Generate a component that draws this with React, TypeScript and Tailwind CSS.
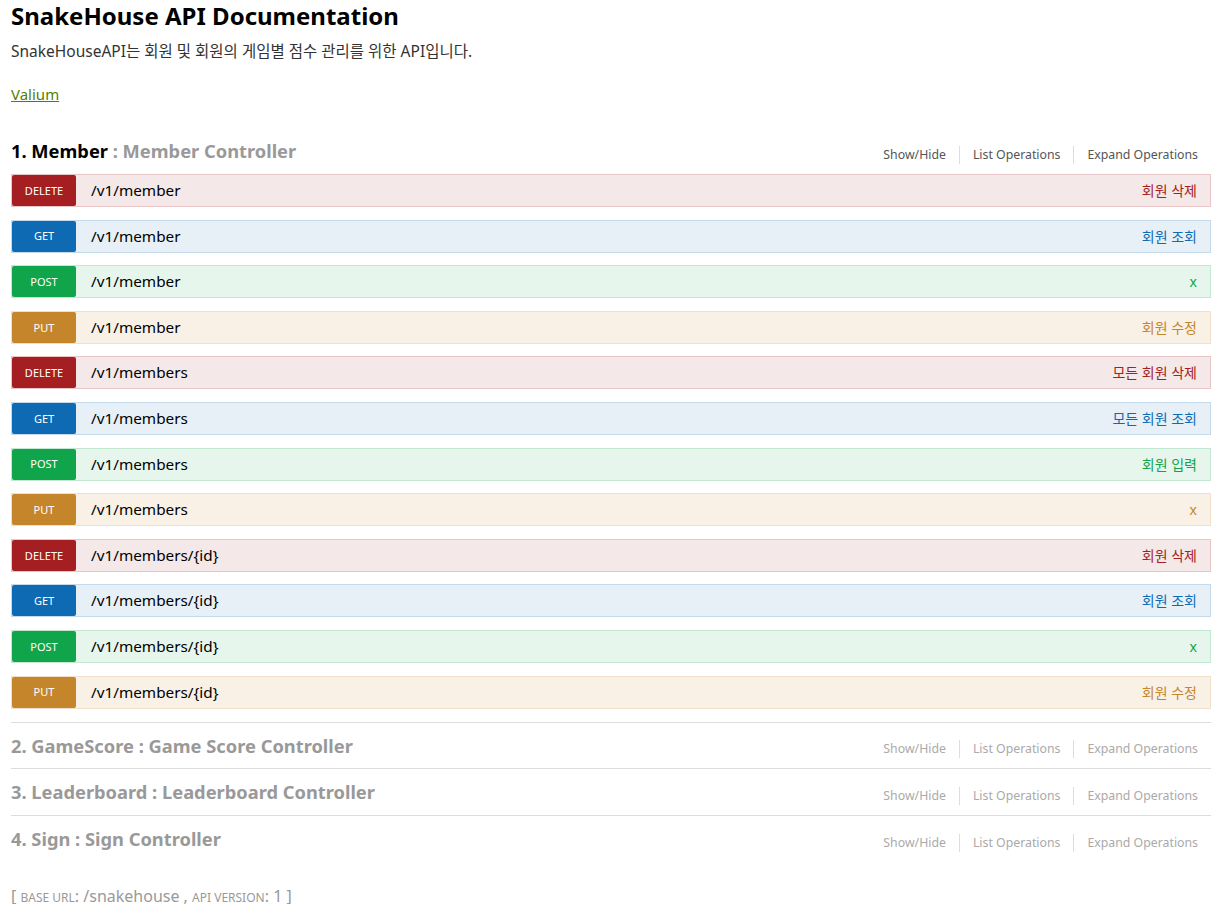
const font = { fontFamily: '"Noto Sans", "Noto Sans CJK KR", sans-serif' }

type Method = 'DELETE' | 'GET' | 'POST' | 'PUT'

const methodStyle: Record<Method, { badge: string; row: string; summary: string }> = {
  DELETE: { badge: 'bg-[#a41e22]', row: 'bg-[#f5e8e8] border-[#e8c6c7]', summary: 'text-[#a41e22]' },
  GET: { badge: 'bg-[#0f6ab4]', row: 'bg-[#e7f0f7] border-[#c3d9ec]', summary: 'text-[#0f6ab4]' },
  POST: { badge: 'bg-[#10a54a]', row: 'bg-[#e7f6ec] border-[#c3e8d1]', summary: 'text-[#10a54a]' },
  PUT: { badge: 'bg-[#c5862b]', row: 'bg-[#f9f0e6] border-[#f0e0ca]', summary: 'text-[#c5862b]' },
}

const ops: { method: Method; path: string; summary: string }[] = [
  { method: 'DELETE', path: '/v1/member', summary: '회원 삭제' },
  { method: 'GET', path: '/v1/member', summary: '회원 조회' },
  { method: 'POST', path: '/v1/member', summary: 'x' },
  { method: 'PUT', path: '/v1/member', summary: '회원 수정' },
  { method: 'DELETE', path: '/v1/members', summary: '모든 회원 삭제' },
  { method: 'GET', path: '/v1/members', summary: '모든 회원 조회' },
  { method: 'POST', path: '/v1/members', summary: '회원 입력' },
  { method: 'PUT', path: '/v1/members', summary: 'x' },
  { method: 'DELETE', path: '/v1/members/{id}', summary: '회원 삭제' },
  { method: 'GET', path: '/v1/members/{id}', summary: '회원 조회' },
  { method: 'POST', path: '/v1/members/{id}', summary: 'x' },
  { method: 'PUT', path: '/v1/members/{id}', summary: '회원 수정' },
]

function Links({ muted }: { muted?: boolean }) {
  const c = muted ? 'text-[#aaa]' : 'text-[#555]'
  return (
    <div className={`flex items-center text-[12.3px] ${c}`}>
      <span className="px-[13px]">Show/Hide</span>
      <span className="h-[18px] w-px bg-[#ddd]" />
      <span className="px-[13px]">List Operations</span>
      <span className="h-[18px] w-px bg-[#ddd]" />
      <span className="px-[13px]">Expand Operations</span>
    </div>
  )
}

function Collapsed({ title, last }: { title: string; last?: boolean }) {
  return (
    <div className={`flex h-[46.5px] items-center justify-between ${last ? '' : 'border-b border-[#ddd]'}`}>
      <h2 className="text-[18.3px] font-bold text-[#999]">{title}</h2>
      <div className="pt-[8px]">
        <Links muted />
      </div>
    </div>
  )
}

export default function App() {
  return (
    <div className="min-h-screen bg-white pl-[11px] pr-[12px] text-[#333]" style={font}>
      <h1 className="pt-[1px] text-[24px] font-bold leading-[30px] text-black">SnakeHouse API Documentation</h1>
      <p className="mt-[10px] text-[15.5px] leading-[20px] text-[#333]">
        SnakeHouseAPI는 회원 및 회원의 게임별 점수 관리를 위한 API입니다.
      </p>
      <a className="mt-[23px] block w-fit text-[15px] leading-[20px] text-[#547f00] underline">Valium</a>

      <div className="mt-[31px] border-b border-[#ddd] pb-[13px]">
        <div className="flex h-[32px] items-center justify-between">
          <h2 className="text-[18.3px] font-bold text-black">
            1. Member <span className="text-[#999]">: Member Controller</span>
          </h2>
          <div className="pt-[8px]">
            <Links />
          </div>
        </div>
        <div className="mt-[7px] flex flex-col gap-[12.6px]">
          {ops.map((op, i) => {
            const s = methodStyle[op.method]
            return (
              <div key={i} className={`flex h-[33px] items-center border ${s.row}`}>
                <span
                  className={`flex h-full w-[64px] items-center justify-center rounded-[2px] pt-[1px] text-[11px] text-white ${s.badge}`}
                >
                  {op.method}
                </span>
                <span className="ml-[15px] text-[15.3px] text-black">{op.path}</span>
                <span className={`ml-auto pr-[13px] text-[14px] ${s.summary}`}>{op.summary}</span>
              </div>
            )
          })}
        </div>
      </div>

      <Collapsed title="2. GameScore : Game Score Controller" />
      <Collapsed title="3. Leaderboard : Leaderboard Controller" />
      <Collapsed title="4. Sign : Sign Controller" last />

      <div className="mt-[22px] text-[16px] leading-[24px] text-[#999]">
        [ <span className="text-[12px] uppercase">Base URL</span>: /snakehouse ,{' '}
        <span className="text-[12px] uppercase">API Version</span>: 1 ]
      </div>
    </div>
  )
}
